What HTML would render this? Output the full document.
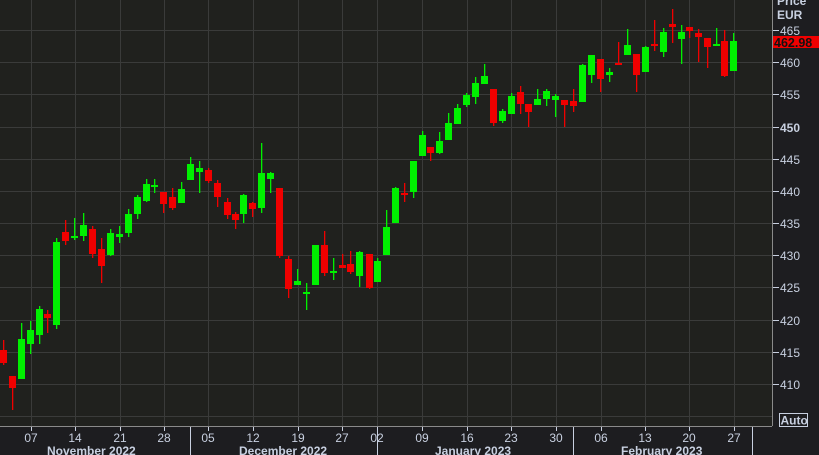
<!DOCTYPE html>
<html><head><meta charset="utf-8"><style>
html,body{margin:0;padding:0;background:#1d1d20;width:819px;height:455px;overflow:hidden}
svg{display:block}
text{font-family:"Liberation Sans",sans-serif;font-size:12px;fill:#c8d0e0}
</style></head><body>
<svg id="s" width="819" height="455" xmlns="http://www.w3.org/2000/svg">
<rect x="0" y="0" width="772" height="426" fill="#20211e"/>
<g id="grid" stroke="#3a3b3a" stroke-width="1"></g>
<line x1="772.5" y1="0" x2="772.5" y2="426" stroke="#8a8a8a"/>
<line x1="0" y1="426.5" x2="772" y2="426.5" stroke="#8a8a8a"/>
<g id="c"></g>
<g id="ax"></g>
<text x="777" y="5" font-weight="bold">Price</text>
<text x="777" y="19" font-weight="bold">EUR</text>
<rect x="773" y="36" width="46" height="12" fill="#f00000"/>
<text x="774" y="47" font-weight="bold" style="fill:#111;font-size:12.5px">462.98</text>
<rect x="779.5" y="413.5" width="28" height="13" fill="none" stroke="#c8d0e0"/>
<text x="780.5" y="424.5" font-weight="bold">Auto</text>
<text x="47" y="455" font-weight="bold">November 2022</text>
<text x="239" y="455" font-weight="bold">December 2022</text>
<text x="435" y="455" font-weight="bold">January 2023</text>
<text x="621" y="455" font-weight="bold">February 2023</text>
</svg>
<script>
var g=document.getElementById('grid'),c=document.getElementById('c'),ax=document.getElementById('ax'),h='',a='';
var xs=[31,75,120,164,208,253,298,342,377,422,467,511,556,601,645,689,734];
var lb=['07','14','21','28','05','12','19','27','02','09','16','23','30','06','13','20','27'];
for(var p=465;p>=405;p-=5){var y=Math.round(30+(465-p)*6.436)+0.5;h+='<line x1="0" y1="'+y+'" x2="772" y2="'+y+'"/>';
if(p>=410){a+='<line x1="773" y1="'+y+'" x2="779" y2="'+y+'" stroke="#c8d0e0"/><text x="780" y="'+(y+4.5)+'"'+(p==450?' font-weight="bold"':'')+'>'+p+'</text>';}}
xs.forEach(function(x,i){h+='<line x1="'+(x+.5)+'" y1="0" x2="'+(x+.5)+'" y2="426"/>';a+='<line x1="'+(x+.5)+'" y1="427" x2="'+(x+.5)+'" y2="431" stroke="#c8d0e0"/><text x="'+x+'" y="442" text-anchor="middle">'+lb[i]+'</text>';});
[190,377,573,752].forEach(function(x){a+='<line x1="'+(x+.5)+'" y1="427" x2="'+(x+.5)+'" y2="455" stroke="#c8d0e0"/>';});
g.innerHTML=h;ax.innerHTML=a;
var d="3,340,365,350,363,r;12,376,410,376,388,r;21,323,379,339,379,g;30,321,354,330,344,g;39,306,344,309,335,g;47,310,333,314,318,r;56,238,329,242,325,g;65,220,245,232,241,r;74,218,240,236,238,g;83,213,241,225,236,g;92,226,258,229,254,r;101,238,283,249,266,r;110,229,256,233,255,g;119,226,243,234,237,g;128,209,237,214,233,g;137,195,219,197,214,g;146,179,202,184,201,g;154,179,193,185,187,g;163,192,213,192,204,r;172,188,210,197,208,r;181,182,203,189,203,g;190,157,180,164,180,g;199,161,193,168,172,g;208,168,183,170,181,r;217,180,207,183,197,r;227,198,219,202,215,r;235,212,229,214,220,r;243,194,223,195,214,g;252,202,217,203,209,r;261,143,213,173,208,g;270,172,193,173,179,g;279,188,258,188,256,r;288,256,298,259,289,r;297,269,285,281,285,g;306,283,310,292,293,g;315,245,285,245,285,g;324,231,276,245,273,r;333,258,280,271,273,g;342,254,268,265,268,r;350,251,274,264,272,r;359,251,287,252,276,g;369,254,289,254,288,r;377,258,282,261,282,g;386,210,255,227,255,g;395,187,223,188,223,g;404,183,202,193,194,r;413,161,198,161,192,g;422,131,156,135,156,g;430,147,161,147,153,r;439,132,154,141,153,g;448,113,140,123,140,g;457,104,124,108,124,g;466,93,107,95,105,g;475,77,104,83,97,g;484,64,84,76,84,g;493,89,126,89,123,r;502,109,123,111,121,g;511,93,114,96,114,g;520,86,114,92,104,r;528,104,127,104,112,r;537,89,105,99,105,g;546,89,106,91,99,g;555,94,117,96,100,g;564,100,127,100,105,r;573,89,112,101,106,r;582,64,102,65,102,g;591,55,83,55,75,g;600,59,92,59,79,r;609,68,82,72,75,g;618,42,65,63,64,r;627,29,55,45,55,g;636,54,92,54,75,r;645,46,72,47,72,g;654,20,51,44,45,r;663,28,57,32,52,g;672,9,43,24,27,r;681,25,64,32,39,g;689,27,38,27,31,r;698,29,62,33,37,r;707,38,68,38,47,r;716,28,46,44,46,g;724,30,77,41,76,r;733,33,71,41,71,g";
var s='';d.split(';').forEach(function(r){var v=r.split(','),x=+v[0],col=v[5]=='g'?'#00f000':'#f00000';
s+='<rect x="'+x+'" y="'+v[1]+'" width="1.3" height="'+(v[2]-v[1])+'" fill="'+col+'"/>';
s+='<rect x="'+(x-3)+'" y="'+v[3]+'" width="7" height="'+Math.max(2,v[4]-v[3])+'" fill="'+col+'"/>';});
c.innerHTML=s;
</script>
</body></html>
